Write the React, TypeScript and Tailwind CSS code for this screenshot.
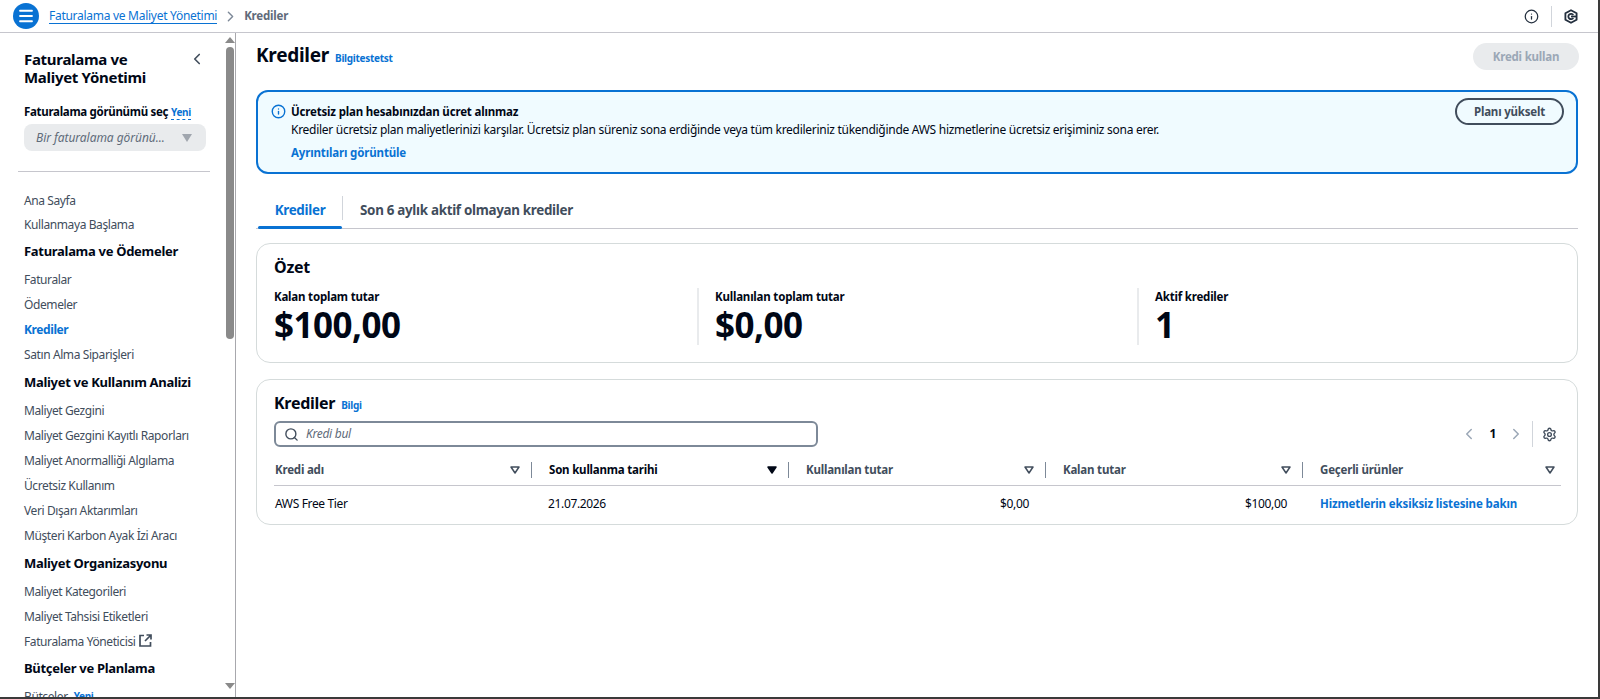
import { ChevronLeft, ChevronRight, Info, Menu, Search, Settings } from "lucide-react";

function NavLink({ children, active, className = "h-[25px]" }: { children: React.ReactNode; active?: boolean; className?: string }) {
  return (
    <div className={`${className} flex items-center whitespace-nowrap text-[12px] tracking-[-0.4px] ${active ? "font-bold text-[#0972d3]" : "text-[#414d5c]"}`}>
      {children}
    </div>
  );
}

function NavHeading({ children, className = "" }: { children: React.ReactNode; className?: string }) {
  return <div className={`${className} h-[30px] flex items-center whitespace-nowrap text-[13px] tracking-[-0.3px] font-bold text-[#000716]`}>{children}</div>;
}

function SortIcon({ filled }: { filled?: boolean }) {
  return (
    <svg width="10" height="8" viewBox="0 0 10 8" className="shrink-0">
      <path d="M1 1h8L5 7z" fill={filled ? "#000716" : "none"} stroke={filled ? "#000716" : "#414d5c"} strokeWidth="1.5" strokeLinejoin="round" />
    </svg>
  );
}

function HeaderCell({ label, width, last, dark }: { label: string; width: string; last?: boolean; dark?: boolean }) {
  return (
    <div className={`${width} flex items-center h-[16px]`}>
      <div className={`flex-1 text-[11.5px] tracking-[-0.2px] font-bold ml-[1px] ${dark ? "text-[#000716]" : "text-[#414d5c]"}`}>{label}</div>
      <SortIcon filled={dark} />
      {!last && <div className="w-px h-[16px] bg-[#7d8998] ml-[11px] mr-[16px]" />}
    </div>
  );
}

function Stat({ label, value, width, divider }: { label: string; value: string; width: string; divider?: boolean }) {
  return (
    <div className={`${width} h-[57px] ${divider ? "border-l-2 border-[#e9ebed] pl-[16px]" : ""}`}>
      <div className="text-[11.5px] tracking-[-0.2px] font-bold text-[#000716] leading-[16px] mt-[1px]">{label}</div>
      <div className="text-[35px] font-bold text-[#000716] leading-[39px] tracking-[-0.5px]">{value}</div>
    </div>
  );
}

export default function App() {
  return (
    <div className="font-['Noto_Sans',sans-serif] tracking-[-0.28px] w-[1600px] h-[699px] overflow-hidden bg-white flex flex-col border-r-2 border-b-2 border-[#3a3a3a] text-[#000716]">
      <header className="h-[33px] shrink-0 border-b border-[#c6c6cd] flex items-center pl-[13px] pr-[20px]">
        <div className="w-[26px] h-[26px] rounded-full bg-[#0972d3] flex items-center justify-center">
          <Menu size={18} color="white" strokeWidth={2.4} />
        </div>
        <span className="ml-[10px] text-[12px] tracking-[-0.28px] text-[#0972d3] border-b border-[#0972d3] leading-[15px]">Faturalama ve Maliyet Yönetimi</span>
        <ChevronRight size={17} color="#7d8998" className="ml-[5px]" />
        <span className="ml-[5px] text-[11.5px] tracking-[-0.2px] font-bold text-[#5f6b7a]">Krediler</span>
        <div className="ml-auto flex items-center">
          <Info size={15} color="#232f3e" strokeWidth={2} />
          <div className="w-px h-[21px] bg-[#d1d5db] mx-[12px]" />
          <svg width="14" height="15" viewBox="0 0 14 15" fill="none" stroke="#232f3e" strokeWidth="1.8">
            <path d="M7 1.2 12.6 4.3v6.4L7 13.8 1.4 10.7V4.3z" strokeLinejoin="round" />
            <path d="M9.3 6A2.7 2.7 0 1 0 9.3 9" />
            <path d="M7 7.5h5" />
          </svg>
        </div>
      </header>

      <div className="flex flex-1 min-h-0">
        <aside className="w-[236px] shrink-0 border-r border-[#a8a8ad] flex overflow-hidden">
          <div className="w-[225px] shrink-0 pl-[24px] pr-[14px]">
            <div className="flex justify-between pt-[17px]">
              <div className="text-[15px] tracking-[-0.3px] font-bold leading-[18px] text-[#000716]">
                Faturalama ve
                <br />
                Maliyet Yönetimi
              </div>
              <ChevronLeft size={18} color="#414d5c" strokeWidth={2.2} className="mr-[5px]" />
            </div>
            <div className="mt-[18px] text-[11.5px] tracking-[-0.3px] font-bold leading-[16px] whitespace-nowrap">
              Faturalama görünümü seç{" "}
              <span className="text-[#0972d3] text-[10px] border-b border-dashed border-[#0972d3]">Yeni</span>
            </div>
            <div className="mt-[4px] h-[27px] w-[182px] rounded-[8px] bg-[#e9ebed] flex items-center justify-between pl-[12px] pr-[14px]">
              <span className="text-[12px] tracking-[-0.05px] italic text-[#5f6b7a]">Bir faturalama görünü...</span>
              <svg width="10" height="8" viewBox="0 0 10 8"><path d="M0 0h10L5 8z" fill="#a0a6ae" /></svg>
            </div>
            <div className="mt-[20px] -ml-[6px] w-[192px] h-px bg-[#c6c6cd]" />
            <div className="mt-[18px]">
              <NavLink className="h-[22px]">Ana Sayfa</NavLink>
              <NavLink>Kullanmaya Başlama</NavLink>
              <NavHeading>Faturalama ve Ödemeler</NavHeading>
              <NavLink>Faturalar</NavLink>
              <NavLink>Ödemeler</NavLink>
              <NavLink active>Krediler</NavLink>
              <NavLink>Satın Alma Siparişleri</NavLink>
              <NavHeading className="mt-[1px]">Maliyet ve Kullanım Analizi</NavHeading>
              <NavLink>Maliyet Gezgini</NavLink>
              <NavLink>Maliyet Gezgini Kayıtlı Raporları</NavLink>
              <NavLink>Maliyet Anormalliği Algılama</NavLink>
              <NavLink>Ücretsiz Kullanım</NavLink>
              <NavLink>Veri Dışarı Aktarımları</NavLink>
              <NavLink>Müşteri Karbon Ayak İzi Aracı</NavLink>
              <NavHeading className="mt-[1px]">Maliyet Organizasyonu</NavHeading>
              <NavLink>Maliyet Kategorileri</NavLink>
              <NavLink>Maliyet Tahsisi Etiketleri</NavLink>
              <NavLink>
                Faturalama Yöneticisi
                <svg width="13" height="13" viewBox="0 0 13 13" fill="none" stroke="#414d5c" strokeWidth="1.7" className="ml-[4px] mt-[-2px]">
                  <path d="M5 1.5H1v10.5h10.5V8" />
                  <path d="M7.5 1h4.5v4.5M12 1 6 7" />
                </svg>
              </NavLink>
              <NavHeading>Bütçeler ve Planlama</NavHeading>
              <NavLink>
                Bütçeler <span className="ml-[6px] text-[10px] font-bold text-[#0972d3]">Yeni</span>
              </NavLink>
            </div>
          </div>
          <div className="w-[10px] shrink-0 flex flex-col items-center pt-[4px] pb-[8px]">
            <svg width="10" height="6" viewBox="0 0 10 6"><path d="M5 0l5 6H0z" fill="#8a8a8a" /></svg>
            <div className="mt-[4px] w-[8px] h-[292px] rounded-full bg-[#8a8a8a]" />
            <svg width="10" height="6" viewBox="0 0 10 6" className="mt-auto"><path d="M0 0h10L5 6z" fill="#8a8a8a" /></svg>
          </div>
        </aside>

        <main className="flex-1 min-w-0 pl-[20px] pr-[20px]">
          <div className="flex justify-between h-[46px] pt-[9px]">
            <div className="flex items-baseline">
              <h1 className="text-[19px] font-bold leading-[26px] text-[#000716]">Krediler</h1>
              <span className="ml-[6px] text-[10px] font-bold text-[#0972d3]">Bilgitestetst</span>
            </div>
            <div className="h-[27px] w-[106px] rounded-full bg-[#e9ebed] flex items-center justify-center text-[11.5px] tracking-[-0.2px] font-bold text-[#9ba7b6] mt-[1px] ml-auto mr-[-1px]">
              Kredi kullan
            </div>
          </div>

          <div className="mt-[11px] h-[84px] rounded-[12px] border-2 border-[#0972d3] bg-[#f0fbff] flex pl-[13px] pr-[12px] pt-[6px]">
            <Info size={15} color="#0972d3" strokeWidth={2.2} className="mt-[6px] shrink-0" />
            <div className="ml-[5px] flex-1">
              <div className="text-[11.5px] tracking-[-0.18px] font-bold leading-[17px] mt-[5px]">Ücretsiz plan hesabınızdan ücret alınmaz</div>
              <div className="text-[12px] leading-[17px] mt-[1px]">
                Krediler ücretsiz plan maliyetlerinizi karşılar. Ücretsiz plan süreniz sona erdiğinde veya tüm kredileriniz tükendiğinde AWS hizmetlerine ücretsiz erişiminiz sona erer.
              </div>
              <div className="mt-[6px] text-[11.5px] tracking-[-0.15px] font-bold leading-[17px] text-[#0972d3]">Ayrıntıları görüntüle</div>
            </div>
            <div className="h-[27px] w-[109px] shrink-0 rounded-full border-2 border-[#414d5c] flex items-center justify-center text-[11.5px] tracking-[-0.2px] font-bold text-[#414d5c]">
              Planı yükselt
            </div>
          </div>

          <div className="mt-[19px] h-[36px] border-b border-[#c6c6cd] flex">
            <div className="relative ml-[2px] w-[84px] flex items-center justify-center text-[13.4px] tracking-[-0.3px] font-bold text-[#0972d3]">
              Krediler
              <div className="absolute left-0 right-0 -bottom-px h-[3px] rounded-full bg-[#0972d3]" />
            </div>
            <div className="w-px h-[24px] bg-[#d1d5db] mt-[3px]" />
            <div className="pl-[17px] flex items-center text-[13.4px] tracking-[-0.3px] font-bold text-[#414d5c]">Son 6 aylık aktif olmayan krediler</div>
          </div>

          <section className="mt-[14px] h-[120px] rounded-[14px] border border-[#d5dbdb] pl-[17px] pr-[16px] pt-[13px]">
            <h2 className="text-[16px] font-bold leading-[20px]">Özet</h2>
            <div className="mt-[11px] flex">
              <Stat label="Kalan toplam tutar" value="$100,00" width="w-[423px]" />
              <Stat label="Kullanılan toplam tutar" value="$0,00" width="w-[440px]" divider />
              <Stat label="Aktif krediler" value="1" width="w-[300px]" divider />
            </div>
          </section>

          <section className="mt-[16px] h-[146px] rounded-[14px] border border-[#d5dbdb] pl-[17px] pr-[16px] pt-[13px]">
            <div className="flex items-baseline">
              <h2 className="text-[16px] font-bold leading-[20px]">Krediler</h2>
              <span className="ml-[6px] text-[10px] font-bold text-[#0972d3]">Bilgi</span>
            </div>
            <div className="mt-[8px] flex items-center">
              <div className="w-[544px] h-[26px] rounded-[6px] border-2 border-[#7d8998] flex items-center pl-[8px]">
                <Search size={15} color="#414d5c" strokeWidth={2.2} />
                <span className="ml-[7px] text-[12px] italic text-[#5f6b7a]">Kredi bul</span>
              </div>
              <div className="ml-auto flex items-center">
                <ChevronLeft size={18} color="#9ba7b6" />
                <span className="mx-[11px] text-[12px] font-bold">1</span>
                <ChevronRight size={18} color="#9ba7b6" />
                <div className="w-px h-[26px] bg-[#d1d5db] ml-[7px] mr-[9px]" />
                <Settings size={15} color="#414d5c" strokeWidth={2.2} className="mr-[4px]" />
              </div>
            </div>
            <div className="mt-[15px] flex items-center">
              <HeaderCell label="Kredi adı" width="w-[274px]" />
              <HeaderCell label="Son kullanma tarihi" width="w-[257px]" dark />
              <HeaderCell label="Kullanılan tutar" width="w-[257px]" />
              <HeaderCell label="Kalan tutar" width="w-[257px]" />
              <HeaderCell label="Geçerli ürünler" width="w-[236px]" last />
            </div>
            <div className="mt-[7px] border-t border-[#c6c6cd] flex h-[36px] items-center text-[12px] tracking-[-0.35px] text-[#000716]">
              <div className="w-[274px] pl-[1px]">AWS Free Tier</div>
              <div className="w-[242px]">21.07.2026</div>
              <div className="w-[239px] text-right">$0,00</div>
              <div className="w-[258px] text-right">$100,00</div>
              <div className="ml-[33px] text-[11.5px] tracking-[-0.13px] font-bold text-[#0972d3]">Hizmetlerin eksiksiz listesine bakın</div>
            </div>
          </section>
        </main>
      </div>
    </div>
  );
}
